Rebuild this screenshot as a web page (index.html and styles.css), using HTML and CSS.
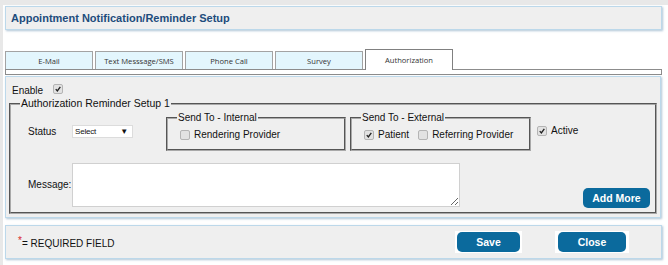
FILE: index.html
```html
<!DOCTYPE html>
<html lang="en">
<head>
    <meta charset="UTF-8">
    <title>Appointment Notification/Reminder Setup</title>
    <link rel="stylesheet" href="styles.css">
</head>
<body>
<div class="page">

    <div class="panel header">
        <h1>Appointment Notification/Reminder Setup</h1>
    </div>

    <div class="tabs">
        <div class="tab">E-Mail</div>
        <div class="tab">Text Messsage/SMS</div>
        <div class="tab">Phone Call</div>
        <div class="tab">Survey</div>
        <div class="tab active">Authorization</div>
    </div>
    <div class="tab-strip"></div>

    <div class="panel main">
        <div class="enable">
            <span>Enable</span>
            <span class="cb on"><svg viewBox="0 0 10 10"><path d="M2.2 5.2 L4.2 7.4 L7.9 2.4"/></svg></span>
        </div>

        <fieldset class="setup">
            <legend>Authorization Reminder Setup 1</legend>

            <div class="row row-top">
                <span class="field-label">Status</span>
                <div class="select"><span>Select</span><span class="arrow">&#9660;</span></div>

                <fieldset class="group internal">
                    <legend>Send To - Internal</legend>
                    <div class="opts">
                        <label class="opt"><span class="cb"></span>Rendering Provider</label>
                    </div>
                </fieldset>

                <fieldset class="group external">
                    <legend>Send To - External</legend>
                    <div class="opts">
                        <label class="opt"><span class="cb on"><svg viewBox="0 0 10 10"><path d="M2.2 5.2 L4.2 7.4 L7.9 2.4"/></svg></span>Patient</label>
                        <label class="opt"><span class="cb"></span>Referring Provider</label>
                    </div>
                </fieldset>

                <label class="opt active-opt"><span class="cb on"><svg viewBox="0 0 10 10"><path d="M2.2 5.2 L4.2 7.4 L7.9 2.4"/></svg></span>Active</label>
            </div>

            <div class="row row-bottom">
                <span class="field-label msg-label">Message:</span>
                <textarea class="message"></textarea>
                <button class="btn add-more" type="button">Add More</button>
            </div>
        </fieldset>
    </div>

    <div class="panel footer">
        <p class="required"><sup>*</sup>= REQUIRED FIELD</p>
        <span class="halo save-halo"><button class="btn save" type="button">Save</button></span>
        <span class="halo close-halo"><button class="btn close" type="button">Close</button></span>
    </div>

</div>
</body>
</html>
```

FILE: styles.css
```css
html {
    background-color: #e8e8e8;
}
body {
    margin: 5px 0 0 3px;
    background-color: #fff;
    font-family: "Liberation Sans", Arial, sans-serif;
    font-size: 10px;
    color: #111;
}
.page {
    padding: 1px 6px 8px 2px;
}
.panel {
    background-color: #efefef;
    border: 1px solid #bcd8ea;
    box-shadow: 1px 1px 2px rgba(110, 150, 180, 0.55);
}
.header {
    height: 22px;
    display: flex;
    align-items: center;
    padding-left: 5px;
}
.header h1 {
    margin: 0;
    font-size: 11px;
    color: #1d4c7c;
}

/* tabs */
.tabs {
    display: flex;
    align-items: flex-end;
    gap: 2px;
    height: 20px;
    margin-top: 19px;
}
.tab {
    width: 88px;
    height: 18px;
    box-sizing: border-box;
    border: 1px solid #a3a3a3;
    border-bottom: none;
    background-color: #e3f6fd;
    display: flex;
    align-items: center;
    justify-content: center;
    font-family: "Open Sans", "Liberation Sans", sans-serif;
    font-size: 7.6px;
    color: #333;
}
.tab.active {
    height: 21px;
    margin-bottom: -1px;
    background-color: #fff;
    border-color: #808080;
    position: relative;
    z-index: 1;
}
.tab-strip {
    height: 4px;
    border: 1px solid #8c8c8c;
    background-color: #fff;
}

/* main panel */
.main {
    margin: 1px 1px 0 0;
    height: 140px;
}
.enable {
    display: flex;
    align-items: center;
    gap: 10px;
    height: 14px;
    margin: 6px 0 0 6px;
}
.cb {
    width: 10px;
    height: 10px;
    box-sizing: border-box;
    border: 1px solid #b4b4b4;
    border-radius: 2px;
    background-color: #e2e2e2;
    display: inline-flex;
    flex-shrink: 0;
}
.cb svg {
    width: 8px;
    height: 8px;
}
.cb path {
    fill: none;
    stroke: #222;
    stroke-width: 1.7;
}
.enable .cb {
    margin-top: -3px;
}
fieldset {
    margin: 0;
    padding: 0;
    border: 2px groove #a9a9a9;
}
legend {
    margin-left: 9px;
    padding: 0 1px;
    line-height: 11px;
}
.setup {
    margin: 1px 3px 0 3px;
    padding-bottom: 5px;
}
.setup > legend {
    font-size: 10.5px;
}
.row {
    display: flex;
    align-items: center;
    padding-left: 17px;
}
.row-top {
    margin-top: 3px;
}
.field-label {
    width: 44px;
    flex-shrink: 0;
}
.select {
    width: 61px;
    height: 13px;
    box-sizing: border-box;
    border: 1px solid #dcdcdc;
    background-color: #fff;
    display: flex;
    align-items: center;
    justify-content: space-between;
    padding: 0 4px 0 2px;
    font-size: 8px;
    letter-spacing: -0.2px;
}
.select .arrow {
    font-size: 8px;
}
.group {
    height: 39px;
    box-sizing: border-box;
}
.group legend {
    font-size: 10px;
}
.internal {
    width: 180px;
    margin-left: 33px;
}
.external {
    width: 181px;
    margin-left: 4px;
}
.opts {
    display: flex;
    gap: 9px;
    padding: 6px 0 0 12px;
}
.opt {
    display: flex;
    align-items: center;
    gap: 4px;
}
.active-opt {
    margin-left: 6px;
    margin-top: -2px;
}
.row-bottom {
    margin-top: 12px;
}
.msg-label {
    margin-top: -2px;
}
.message {
    width: 388px;
    height: 44px;
    box-sizing: border-box;
    border: 1px solid #d0d0d0;
    margin: 0;
    background-color: #fff;
}
.btn {
    background-color: #0b6a9d;
    color: #fff;
    border: none;
    border-radius: 5px;
    height: 20px;
    padding: 0;
    font-family: "Liberation Sans", Arial, sans-serif;
    font-size: 10.5px;
    font-weight: bold;
    cursor: pointer;
}
.add-more {
    width: 67px;
    margin-left: 123px;
    align-self: flex-end;
    margin-bottom: -1px;
}

/* footer */
.footer {
    margin-top: 7px;
    height: 32px;
    display: flex;
    align-items: center;
    padding-right: 32px;
}
.required {
    flex: 1;
    margin: 0 0 0 12px;
}
.required sup {
    color: #d9262b;
    font-size: 10px;
    vertical-align: 3px;
}
.halo {
    background-color: #fff;
    padding: 1px 2px;
    display: flex;
}
.save {
    width: 63px;
}
.close-halo {
    margin-left: 33px;
    padding: 1px 3px;
}
.close {
    width: 68px;
}
```
